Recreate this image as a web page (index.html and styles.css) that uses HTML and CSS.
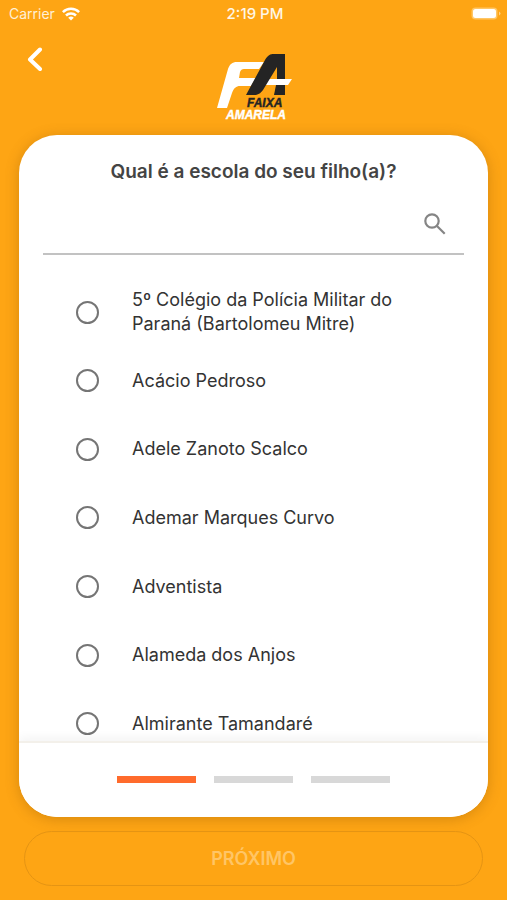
FILE: index.html
```html
<!DOCTYPE html>
<html lang="pt-BR">
<head>
<meta charset="utf-8">
<meta name="viewport" content="width=device-width, initial-scale=1">
<title>Faixa Amarela</title>
<link rel="stylesheet" href="styles.css">
</head>
<body>
<div class="status">
  <div class="carrier">Carrier
    <svg width="18" height="14" viewBox="0 0 18 14" fill="none" stroke="#fff" stroke-width="2.5" aria-hidden="true"><path d="M.9 5.2a11.5 11.5 0 0 1 16.2 0M4 8.500a7.100 7.100 0 0 1 10 0"/><path d="M9 13.600 6.200 10.800a4 4 0 0 1 5.600 0z" fill="#fff" stroke="none"/></svg>
  </div>
  <div class="time">2:19 PM</div>
  <svg class="battery" width="30" height="14" viewBox="0 0 30 14" aria-hidden="true"><rect x=".5" y=".5" width="26" height="12" rx="4" fill="#ffc665"/><rect x="2" y="2" width="23" height="9" rx="2.500" fill="#fff"/><path d="M28 4.500q3 2 0 4z" fill="#ffd286"/></svg>
</div>
<header class="top">
  <button class="back" type="button" aria-label="Voltar">
    <svg width="16" height="24" viewBox="0 0 16 24" fill="none" stroke="#fff" stroke-width="4" stroke-linecap="round" stroke-linejoin="round"><path d="M13 2.500 3 12.500 13 22"/></svg>
  </button>
  <svg class="logo" width="78" height="70" viewBox="0 0 78 70" role="img" aria-label="Faixa Amarela">
    <path d="M22 8H49L44 15H29Q26 15 25 18L24 24H41L36 32H25C21 32 19 34 17 39L12 54H2L13 15C15 10 17 8 22 8Z" fill="#fff"/>
    <path d="M51 25H77L73 31H48Z" fill="#fff"/>
    <path d="M31 41 50 6C53 1 55 0 59 0H70V25H62V13L48 36C45 40 43 41 38 41Z" fill="#242424"/>
    <path d="M61 31H70V41H59Z" fill="#242424"/>
    <text x="32" y="53" class="logo-dark">FAIXA</text>
    <text x="11" y="65" class="logo-light">AMARELA</text>
  </svg>
</header>
<main class="card">
  <h1>Qual é a escola do seu filho(a)?</h1>
  <div class="search">
    <input type="text" aria-label="Buscar escola">
    <button type="button" aria-label="Buscar"><svg width="22" height="22" viewBox="0 0 22 22" fill="none" stroke="#858585" stroke-width="2.200"><circle cx="8" cy="8" r="6.700"/><path d="m13 13 7.700 7.700"/></svg></button>
  </div>
  <div class="viewport">
    <div class="list" role="radiogroup" aria-label="Escolas">
      <label><input type="radio" name="escola"><span>5º Colégio da Polícia Militar do Paraná (Bartolomeu Mitre)</span></label>
      <label><input type="radio" name="escola"><span>Acácio Pedroso</span></label>
      <label><input type="radio" name="escola"><span>Adele Zanoto Scalco</span></label>
      <label><input type="radio" name="escola"><span>Ademar Marques Curvo</span></label>
      <label><input type="radio" name="escola"><span>Adventista</span></label>
      <label><input type="radio" name="escola"><span>Alameda dos Anjos</span></label>
      <label><input type="radio" name="escola"><span>Almirante Tamandaré</span></label>
    </div>
  </div>
  <div class="steps"><i class="on"></i><i></i><i></i></div>
</main>
<footer><button class="next" type="button" disabled>PRÓXIMO</button></footer>
</body>
</html>
```
FILE: styles.css
```css
* {
  box-sizing: border-box;
}

body {
  margin: 0;
  height: 100vh;
  display: flex;
  flex-direction: column;
  overflow: hidden;
  background: #fea514;
  color: #333;
  font-family: Inter, "Liberation Sans", sans-serif;
}

button {
  border: 0;
  padding: 0;
  background: none;
  font: inherit;
}

svg {
  display: block;
}

.status {
  display: grid;
  grid-template-columns: 1fr auto 1fr;
  align-items: center;
  height: 27px;
  padding: 0 6px 0 9px;
  color: #fff;
  font-size: 14px;
}

.carrier {
  display: flex;
  align-items: center;
  gap: 7px;
  color: #fff0d6;
}

.time {
  font-weight: 500;
  font-size: 15px;
  color: #fff6e6;
}

.battery {
  justify-self: end;
}

.top {
  display: grid;
  grid-template-columns: 1fr auto 1fr;
  align-items: start;
  height: 108px;
  padding: 20px 27px 0;
}

.back {
  justify-self: start;
}

.logo {
  margin-top: 7px;
  overflow: visible;
}

.logo text {
  font-family: "Liberation Sans", sans-serif;
  font-size: 12px;
  font-weight: 700;
  font-style: italic;
  stroke-width: 0.4px;
}

.logo-dark {
  fill: #242424;
  stroke: #242424;
}

.logo-light {
  fill: #fff;
  stroke: #fff;
}

.card {
  flex: 1;
  min-height: 0;
  display: flex;
  flex-direction: column;
  margin: 0 19px;
  border-radius: 38px;
  overflow: hidden;
  background: #fff;
  box-shadow: 0 2px 14px rgba(120, 70, 0, 0.3);
}

h1 {
  margin: 25px 0 0;
  font-size: 19px;
  line-height: 24px;
  font-weight: 600;
  text-align: center;
  color: #444;
}

.search {
  display: flex;
  align-items: center;
  height: 71px;
  margin: 0 24px;
  padding: 11px 18px 0 0;
  border-bottom: 2px solid #c2c2c2;
}

.search input {
  flex: 1;
  min-width: 0;
  border: 0;
  outline: 0;
  background: none;
  font: inherit;
}

.viewport {
  flex: 1;
  min-height: 0;
  padding-top: 23px;
  overflow: hidden;
}

.list {
  display: grid;
  grid-auto-rows: 1fr;
  height: 480px;
}

.list label {
  display: flex;
  align-items: center;
  gap: 33px;
  padding: 0 60px 0 57px;
  font-size: 18px;
  line-height: 24px;
}

.list input {
  appearance: none;
  flex: none;
  width: 23px;
  height: 23px;
  margin: 0;
  border: 2px solid #757575;
  border-radius: 50%;
}

.list input:checked {
  background: #ff6b2c;
}

.steps {
  position: relative;
  display: flex;
  justify-content: center;
  gap: 18px;
  height: 76px;
  padding-top: 33px;
  border-top: 2px solid #f3f0ea;
  background: #fff;
  box-shadow: 0 -3px 10px rgba(0, 0, 0, 0.05);
}

.steps i {
  width: 79px;
  height: 7px;
  background: #d8d8d8;
}

.steps .on {
  background: #ff6b2c;
}

footer {
  padding: 14px 24px;
}

.next {
  display: block;
  width: 100%;
  height: 55px;
  border: 1px solid #e59413;
  border-radius: 28px;
  color: #ffc566;
  font-size: 18px;
  font-weight: 600;
}
```
